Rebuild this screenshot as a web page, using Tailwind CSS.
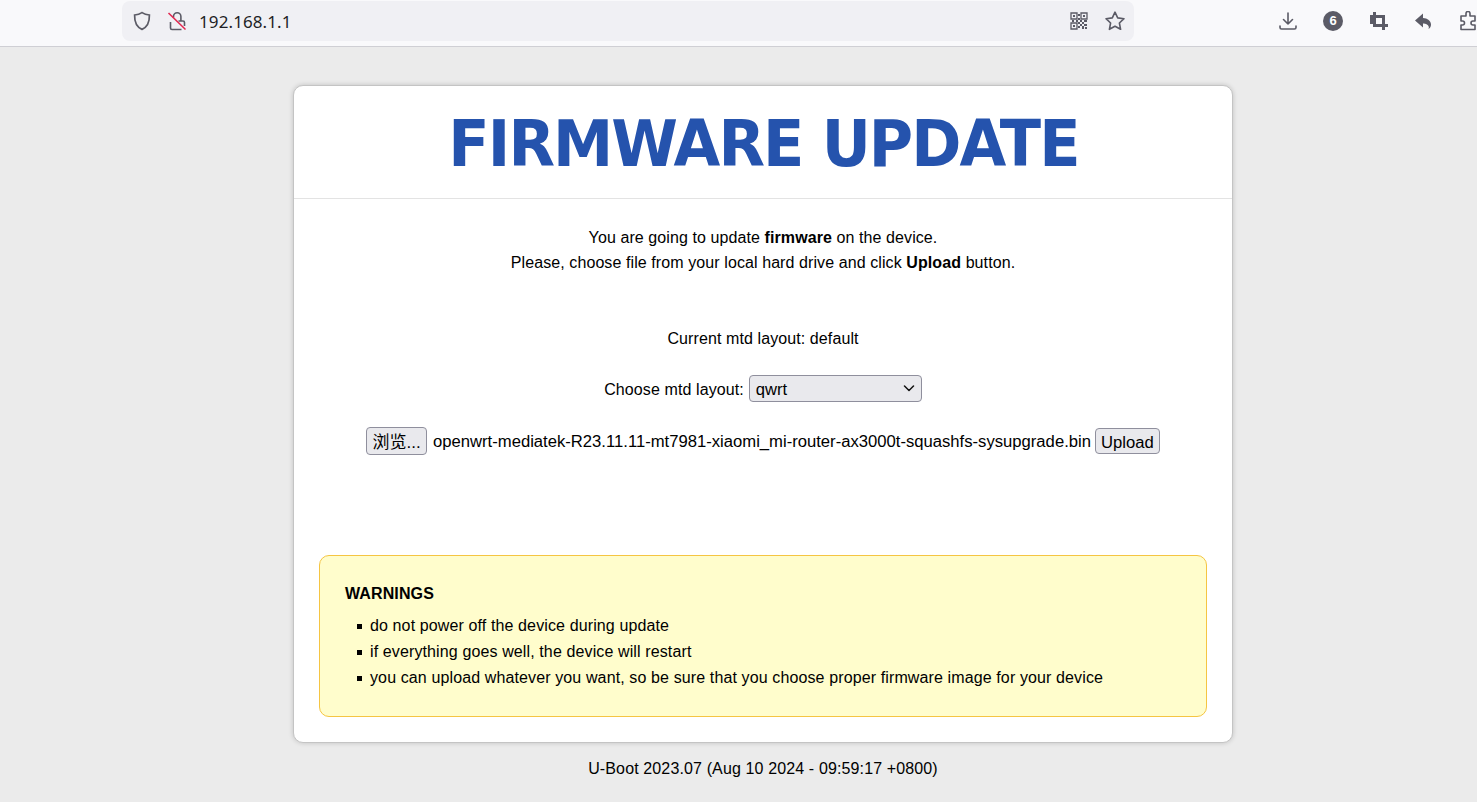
<!DOCTYPE html>
<html lang="en">
<head>
    <meta charset="UTF-8">
    <meta name="viewport" content="width=device-width, initial-scale=1.0">
    <title>Firmware update</title>
    <script src="https://cdn.jsdelivr.net/npm/@tailwindcss/browser@4"></script>
</head>
<body class="bg-[#ebebeb] h-[802px] overflow-hidden font-['Liberation_Sans','Noto_Sans_CJK_SC',sans-serif] text-black text-base">

    <!-- Browser toolbar -->
    <header class="h-[47px] bg-[#f9f9fb] border-b border-[#cfcfd4] flex items-start overflow-hidden">
        <div class="ml-[122px] mt-px w-[1012px] shrink-0 h-[40px] bg-[#f0f0f4] rounded-lg flex items-center">
            <svg class="ml-[10px] w-5 h-5" viewBox="0 0 20 20" fill="none" stroke="#5b5b66" stroke-width="1.7"><path d="M10 1.600c2.200 1.500 4.600 2.200 7.400 2.400.2 7-1.600 11.800-7.400 14.400C4.200 15.800 2.400 11 2.600 4 5.400 3.800 7.800 3.100 10 1.600z"/></svg>
            <svg class="ml-[15px] w-5 h-5" viewBox="0 0 20 20" fill="none" stroke="#5b5b66" stroke-width="1.600"><path d="M6.500 6.500V5.500a3.700 3.700 0 0 1 7.400 0V10"/><path d="M3.500 11v6a1.500 1.500 0 0 0 1.500 1.500h9.500"/><path d="M17.500 15v-3.500a1.500 1.500 0 0 0-1.500-1.500h-4.500"/><path d="M1.500 2 18.500 18.500" stroke="#e22850"/></svg>
            <span class="ml-[12px] mt-[2px] font-['Noto_Sans',sans-serif] text-[17px] text-[#1f1f26] tracking-[0.1px]">192.168.1.1</span>
            <svg class="ml-auto w-[18px] h-[18px]" viewBox="0 0 18 18" fill="none" stroke="#5b5b66" stroke-width="1.300"><path d="M1 1h6v6H1zM11 1h6v6h-6zM1 11h6v6H1z"/><path d="M3 3h2v2H3zM13 3h2v2h-2zM3 13h2v2H3z" fill="#5b5b66" stroke="none"/><path d="M8 2h2v2H8zM8 6h2v2H8zM2 8h2v2H2zM6 8h2v2H6zM10 8h2v2h-2zM14 8h3v2h-3zM8 10h2v2H8zM12 10h2v2h-2zM10 12h2v2h-2zM14 12h3v2h-3zM8 14h2v2H8zM12 14h2v3h-2zM15 15h2v2h-2z" fill="#5b5b66" stroke="none"/></svg>
            <svg class="ml-[16px] mr-[8px] w-[22px] h-[22px]" viewBox="0 0 22 22" fill="none" stroke="#5b5b66" stroke-width="1.600" stroke-linejoin="round"><path d="M11 2.200 13.700 7.900 20 8.700 15.400 13 16.600 19.300 11 16.200 5.400 19.300 6.600 13 2 8.700 8.300 7.900z"/></svg>
        </div>
        <div class="flex-1 flex items-center h-[42px]">
            <svg class="ml-[144px] w-5 h-5" viewBox="0 0 20 20" fill="none" stroke="#5b5b66" stroke-width="1.600" stroke-linecap="round" stroke-linejoin="round"><path d="M10 2v11M5.500 8.500 10 13l4.500-4.500M2 15v1.500A1.500 1.500 0 0 0 3.500 18h13a1.500 1.500 0 0 0 1.500-1.500V15"/></svg>
            <span class="ml-[25px] w-5 h-5 rounded-full bg-[#5b5b66] text-white text-[13px] font-bold flex items-center justify-center">6</span>
            <svg class="ml-[26px] w-5 h-5" viewBox="0 0 20 20" fill="#5b5b66"><path d="M4 1h3v3h9v9h3v3h-3v3h-3v-3H4v-3H1V4h3zM7 7v6h6V7z"/></svg>
            <svg class="ml-[24px] w-5 h-5" viewBox="0 0 20 20" fill="#5b5b66"><path d="M10 2.500v4.500c4.500 0 8 3 8 6.500 0 2-1 3.500-2.500 4.500.5-1 .5-2 0-3-1-1.700-3-2.700-5.500-2.500v4L2 9.500z"/></svg>
            <svg class="ml-[25px] w-5 h-5 shrink-0" viewBox="0 0 20 20" fill="none" stroke="#5b5b66" stroke-width="1.600" stroke-linejoin="round"><path d="M8 2.500a2 2 0 0 1 4 0V5h5v5h-2a2 2 0 0 0 0 4h2v4.500H3V14h1.500a2 2 0 0 0 0-4H3V5h5z"/></svg>
        </div>
    </header>

    <main class="w-[940px] ml-[293px] mt-[38px] h-[658px] bg-white border border-[#c4c4c4] rounded-[10px] shadow-[0_0_5px_rgba(0,0,0,0.18)]">
        <h1 class="h-[113px] border-b border-[#e3e3e3] text-center font-['DejaVu_Sans',sans-serif] font-bold text-[64px] leading-[116px] text-[#2553ad] tracking-[-2px]"><span class="inline-block scale-x-[0.945]">FIRMWARE UPDATE</span></h1>

        <section class="pt-[26px] text-center leading-[25px] tracking-[0.09px]">
            <p>You are going to update <strong>firmware</strong> on the device.</p>
            <p>Please, choose file from your local hard drive and click <strong>Upload</strong> button.</p>
        </section>

        <p class="mt-[51px] text-center leading-[25px] tracking-[0.1px]">Current mtd layout: default</p>

        <div class="mt-[24px] h-[27px] flex justify-center items-center">
            <span class="tracking-[0.1px] relative top-px">Choose mtd layout:</span>
            <div class="relative ml-[5px]">
                <select class="block appearance-none w-[173px] h-[27px] pl-[6px] pt-[2px] bg-[#e9e9ed] border border-[#8f8f9d] rounded-[4px] text-[16.6px]">
                    <option>qwrt</option>
                </select>
                <svg class="absolute right-[7px] top-[10px] w-[12px] h-[7px] pointer-events-none" viewBox="0 0 12 7" fill="none" stroke="#111" stroke-width="1.500" stroke-linecap="round" stroke-linejoin="round"><path d="M1.500 1 6 5.500 10.500 1"/></svg>
            </div>
        </div>

        <div class="mt-[25px] h-[28px] flex justify-center items-center text-[16.65px]">
            <button class="w-[61px] h-[28px] pt-[2px] bg-[#e9e9ed] border border-[#8f8f9d] rounded-[4px] text-[17px]">浏览...</button>
            <span class="ml-[6px] relative top-px">openwrt-mediatek-R23.11.11-mt7981-xiaomi_mi-router-ax3000t-squashfs-sysupgrade.bin</span>
            <button class="ml-[4px] w-[65px] h-[26px] pt-[2px] bg-[#e9e9ed] border border-[#8f8f9d] rounded-[4px]">Upload</button>
        </div>

        <aside class="mt-[100px] mx-[25px] h-[162px] bg-[#fffdcc] border border-[#f5c542] rounded-[10px] pl-[25px] pt-[25px] tracking-[0.12px]">
            <h2 class="font-bold leading-[25px]">WARNINGS</h2>
            <ul class="mt-[7px] ml-[25px] leading-[26px]">
                <li class="flex items-center"><span class="w-[5px] h-[5px] bg-black -ml-[13px] mr-[8px]"></span>do not power off the device during update</li>
                <li class="flex items-center"><span class="w-[5px] h-[5px] bg-black -ml-[13px] mr-[8px]"></span>if everything goes well, the device will restart</li>
                <li class="flex items-center"><span class="w-[5px] h-[5px] bg-black -ml-[13px] mr-[8px]"></span>you can upload whatever you want, so be sure that you choose proper firmware image for your device</li>
            </ul>
        </aside>
    </main>

    <footer class="w-[940px] ml-[293px] mt-[13px] text-center leading-[25px] tracking-[0.13px]">U-Boot 2023.07 (Aug 10 2024 - 09:59:17 +0800)</footer>
</body>
</html>
